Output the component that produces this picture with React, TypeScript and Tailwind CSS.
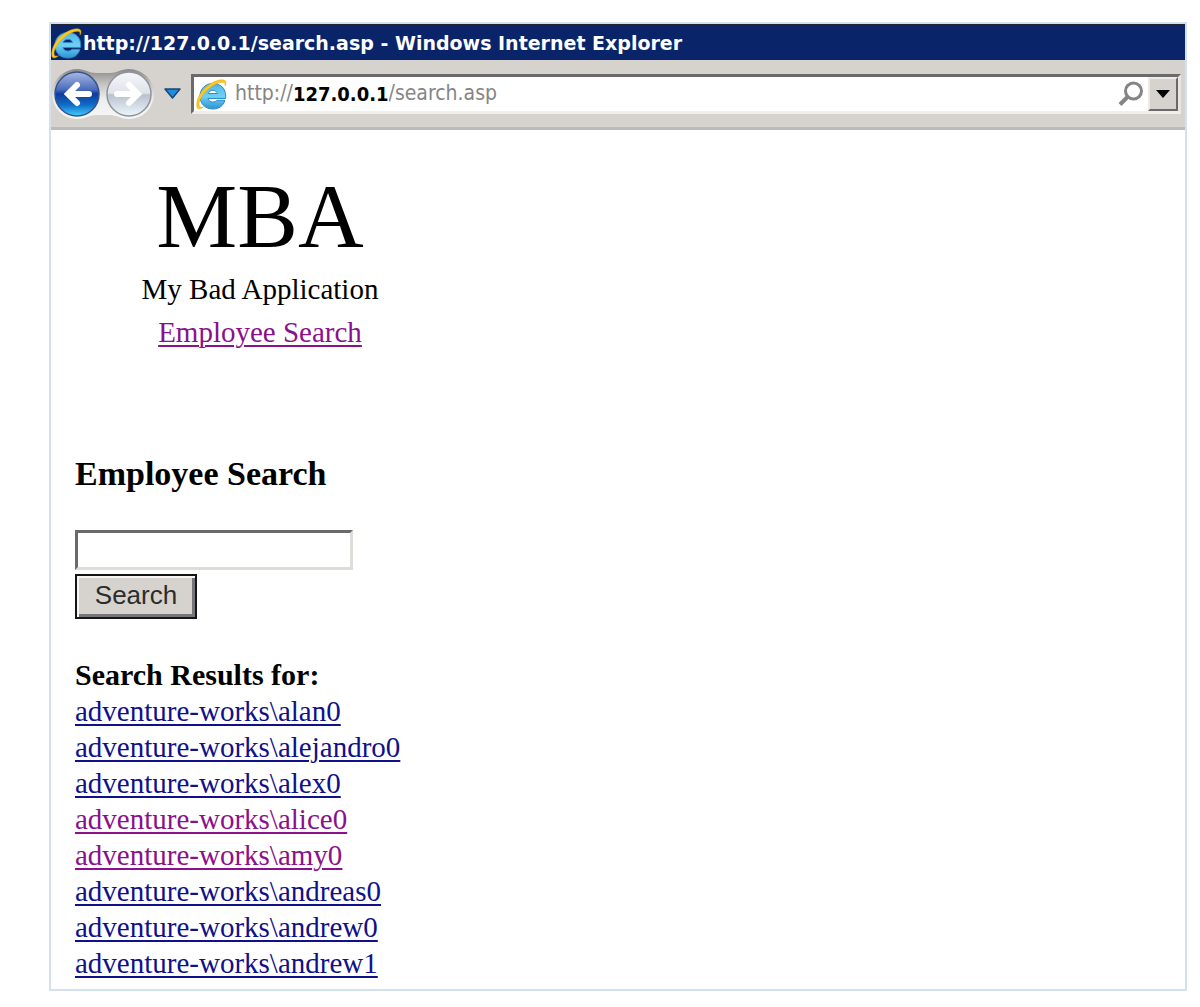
import * as React from 'react';

interface IResult {
  name: string;
  visited?: boolean;
}

const results: IResult[] = [
  { name: 'adventure-works\\alan0' },
  { name: 'adventure-works\\alejandro0' },
  { name: 'adventure-works\\alex0' },
  { name: 'adventure-works\\alice0', visited: true },
  { name: 'adventure-works\\amy0', visited: true },
  { name: 'adventure-works\\andreas0' },
  { name: 'adventure-works\\andrew0' },
  { name: 'adventure-works\\andrew1' },
];

const BrowserLogo: React.FunctionComponent = () => (
  <svg viewBox="1 0 31 32" className="h-8 w-[31px] shrink-0" aria-hidden="true">
    <defs>
      <linearGradient id="logoBlue" x1="0" y1="0" x2="0" y2="1">
        <stop offset="0" stopColor="#52b4e4" />
        <stop offset="0.5" stopColor="#6fd0f5" />
        <stop offset="1" stopColor="#2e93d2" />
      </linearGradient>
    </defs>
    <path
      d="M30.500 20.500H13c.5 2.200 2.200 3.500 4.700 3.500 2 0 3.400-.6 4.200-1.700h8C28.300 27.800 24 31 18 31 10.300 31 5 25.800 5 18.300S10.300 5.500 18 5.500s12.700 5 12.700 12.700zM13.200 15.500h9.200c-.5-2-2.100-3.200-4.500-3.200s-4.100 1.200-4.700 3.200z"
      fill="url(#logoBlue)"
      stroke="#2b8cc8"
      strokeWidth="1"
    />
    <path
      d="M2 29.500C.5 23 5 13.500 13 7.500 19 3 26 .5 30 2.500c1.500 1 1.200 3.500 0 5.500.3-2.200-.2-3.400-1.800-3.700C24 3.800 18 7 13 11.500 7.500 16.500 3.800 22.500 4 27c.2 2.200 2 2.600 4.500 1.800C6 31 3 31.700 2 29.500z"
      fill="#fbc91f"
      stroke="#e9a313"
      strokeWidth="0.5"
    />
  </svg>
);

// Back and forward share one pill-shaped recess behind the two discs
const NavButtons: React.FunctionComponent = () => (
  <div className="relative flex h-13 w-26 shrink-0">
    <svg viewBox="0 0 104 52" className="absolute inset-0 h-13 w-26" aria-hidden="true">
      <defs>
        <linearGradient id="recess" x1="0" y1="0" x2="0" y2="1">
          <stop offset="0" stopColor="#8a8888" />
          <stop offset="0.3" stopColor="#c6c4c2" />
          <stop offset="0.6" stopColor="#eeedec" />
          <stop offset="1" stopColor="#f7f7f7" />
        </linearGradient>
      </defs>
      <path
        d="M26 1C34 1 38 5 45 5H59C66 5 70 1 78 1A25 25 0 0 1 78 51C70 51 66 47 59 47H45C38 47 34 51 26 51A25 25 0 0 1 26 1z"
        fill="url(#recess)"
      />
    </svg>
    <button type="button" aria-label="Back" className="relative w-13">
      <svg viewBox="-26 -26 52 52" className="size-13">
        <defs>
          <linearGradient id="backFill" x1="0" y1="0" x2="0" y2="1">
            <stop offset="0" stopColor="#a9b9e2" />
            <stop offset="0.4" stopColor="#4a6cbc" />
            <stop offset="0.5" stopColor="#0c3c9c" />
            <stop offset="0.75" stopColor="#0f6dc8" />
            <stop offset="1" stopColor="#3fd0fa" />
          </linearGradient>
        </defs>
        <circle r="22" fill="url(#backFill)" stroke="#35548f" strokeWidth="1.500" />
        <path d="M12 0H-8M0-9-9 0 0 9" fill="none" stroke="#fff" strokeWidth="6" strokeLinecap="round" />
      </svg>
    </button>
    <button type="button" aria-label="Forward" className="relative w-13">
      <svg viewBox="-26 -26 52 52" className="size-13">
        <defs>
          <linearGradient id="forwardFill" x1="0" y1="0" x2="0" y2="1">
            <stop offset="0" stopColor="#f5f7fa" />
            <stop offset="0.48" stopColor="#dfe3ea" />
            <stop offset="0.52" stopColor="#b9c2cf" />
            <stop offset="1" stopColor="#eef6fc" />
          </linearGradient>
        </defs>
        <circle r="22" fill="url(#forwardFill)" stroke="#8e949c" strokeWidth="1.500" />
        <path d="M-12 0H8M0-9 9 0 0 9" fill="none" stroke="#fff" strokeWidth="6" strokeLinecap="round" />
      </svg>
    </button>
  </div>
);

const TitleBar: React.FunctionComponent = () => (
  <div className="flex h-9 items-center border-t-2 border-[#20242f] bg-[#0a246a] font-['DejaVu_Sans',sans-serif]">
    <BrowserLogo />
    <p className="pl-px text-[19px] font-bold whitespace-nowrap text-white">
      http://127.0.0.1/search.asp - Windows Internet Explorer
    </p>
  </div>
);

const Toolbar: React.FunctionComponent = () => (
  <div className="flex h-[70px] items-center border-b-3 border-[#bcbbba] bg-[#d6d3ce] pr-1 font-['DejaVu_Sans_Condensed','DejaVu_Sans',sans-serif]">
    <NavButtons />
    <button type="button" aria-label="Recent pages" className="mx-2 shrink-0">
      <svg viewBox="0 0 20 14" className="h-3.5 w-5">
        <path d="M2 2H17L9.500 11z" fill="#1d8fd6" stroke="#17457e" strokeWidth="1.500" strokeLinejoin="round" />
      </svg>
    </button>
    <div className="flex h-10 min-w-0 flex-1 items-center border-3 border-t-[#6c696a] border-r-[#e8e6e2] border-b-[#efeeec] border-l-[#6c696a] bg-white pl-0.5">
      <BrowserLogo />
      <div className="flex min-w-0 flex-1 items-center pl-2 text-[21px] text-[#858585]">
        <span>http://</span>
        <span className="text-[20px] font-bold text-black">127.0.0.1</span>
        <input
          type="text"
          aria-label="Address"
          defaultValue="/search.asp"
          className="min-w-0 flex-1 bg-transparent outline-none"
        />
      </div>
      <button type="button" aria-label="Search the web" className="mr-1 shrink-0">
        <svg viewBox="0 0 26 26" className="size-6.5" fill="none" stroke="#858585">
          <circle cx="15.500" cy="10" r="8" strokeWidth="3" />
          <path d="M9.500 16 2 23.500" strokeWidth="4" />
        </svg>
      </button>
      <button
        type="button"
        aria-label="Show address list"
        className="flex h-full w-[30px] shrink-0 items-center justify-center border-2 border-t-[#eceae6] border-r-[#6c696a] border-b-[#6c696a] border-l-[#eceae6] bg-[#d6d3ce]"
      >
        <svg viewBox="0 0 14 8" className="h-2 w-3.5">
          <path d="M0 0H14L7 8z" fill="#000" />
        </svg>
      </button>
    </div>
  </div>
);

const App: React.FunctionComponent = () => {
  return (
    <div className="bg-white pt-[22px] pr-[13px] pb-4 pl-[49px]">
      <div className="border-2 border-[#d3e1ee]">
        <TitleBar />
        <Toolbar />
        <main className="px-6 pt-9 pb-2 font-['Liberation_Serif',serif] text-[29px] leading-9 text-black">
          <header className="flex w-[370px] flex-col items-center">
            <h1 className="text-[91px] leading-[102px]">MBA</h1>
            <p className="leading-[43px]">My Bad Application</p>
            <a href="#search" className="leading-[43px] text-[#8b108b] underline decoration-2 underline-offset-3">
              Employee Search
            </a>
          </header>
          <form id="search" className="mt-[102px] flex flex-col items-start" onSubmit={(e) => e.preventDefault()}>
            <h2 className="text-[34px] leading-9 font-bold">
              <label htmlFor="employee">Employee Search</label>
            </h2>
            <input
              id="employee"
              type="text"
              className="mt-[38px] h-10 w-[278px] border-3 border-t-[#6c696a] border-r-[#deddd8] border-b-[#deddd8] border-l-[#6c696a] px-1 text-[24px] outline-none"
            />
            <button
              type="submit"
              className="mt-1 h-[45px] w-[122px] border-2 border-[#151515] bg-[#d6d3ce] pb-1 font-['Liberation_Sans',sans-serif] text-[26px] text-[#2c2c2c] shadow-[inset_2px_2px_0_#f7f6f4,inset_-3px_-3px_0_#77757a]"
            >
              Search
            </button>
          </form>
          <section className="mt-[38px]">
            <h3 className="text-[30px] leading-9 font-bold">Search Results for:</h3>
            <ul>
              {results.map((result) => (
                <li key={result.name}>
                  <a
                    href="#employee"
                    className={
                      result.visited
                        ? 'text-[#8b108b] underline decoration-2 underline-offset-3'
                        : 'text-[#10108b] underline decoration-2 underline-offset-3'
                    }
                  >
                    {result.name}
                  </a>
                </li>
              ))}
            </ul>
          </section>
        </main>
      </div>
    </div>
  );
};

export default App;
